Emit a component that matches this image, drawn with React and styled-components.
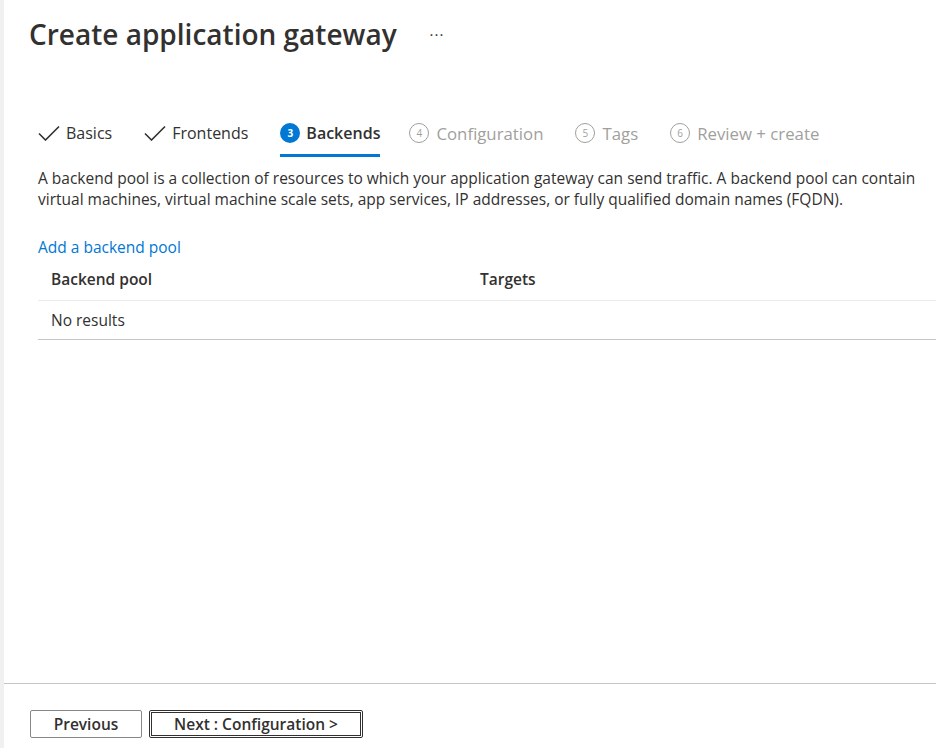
import React from "react";
import styled, { createGlobalStyle } from "styled-components";

const GlobalStyle = createGlobalStyle`
  html, body {
    margin: 0;
    padding: 0;
    background: #ffffff;
  }
  body {
    font-family: "Open Sans", "Noto Sans", sans-serif;
    color: #323130;
  }
`;

const Page = styled.div`
  width: 936px;
  height: 748px;
  display: flex;
  flex-direction: column;
  border-left: 4px solid #f0f0f0;
  box-sizing: border-box;
  overflow: hidden;
`;

const Main = styled.div`
  flex: 1;
  display: flex;
  flex-direction: column;
`;

const Header = styled.div`
  display: flex;
  align-items: center;
  gap: 33px;
  padding: 13px 0 0 25px;
  height: 42px;
`;

const Title = styled.h1`
  margin: 0;
  font-size: 28px;
  font-weight: 600;
  color: #323130;
`;

const More = styled.span`
  font-size: 15px;
  color: #323130;
  letter-spacing: 1px;
`;

const Body = styled.div`
  padding: 0 0 0 34px;
  display: flex;
  flex-direction: column;
`;

const Steps = styled.div`
  display: flex;
  align-items: stretch;
  gap: 32px;
  margin-top: 57px;
  height: 45px;
`;

const Step = styled.div`
  display: flex;
  align-items: center;
  gap: ${(p) => (p.$muted ? 7 : 6)}px;
  height: 42px;
  font-size: ${(p) => (p.$muted ? 16.8 : 16)}px;
  color: ${(p) => (p.$muted ? "#a19f9d" : "#323130")};
  font-weight: ${(p) => (p.$active ? 600 : 400)};
  border-bottom: 3px solid ${(p) => (p.$active ? "#0078d4" : "transparent")};
  margin-right: ${(p) => (p.$active ? -3 : 0)}px;
`;

const Num = styled.span`
  width: 20px;
  height: 20px;
  border-radius: 50%;
  box-sizing: border-box;
  display: inline-flex;
  align-items: center;
  justify-content: center;
  font-size: 10px;
  font-weight: ${(p) => (p.$active ? 700 : 400)};
  background: ${(p) => (p.$active ? "#0078d4" : "transparent")};
  color: ${(p) => (p.$active ? "#ffffff" : "#a19f9d")};
  border: ${(p) => (p.$active ? "none" : "1px solid #a19f9d")};
`;

const Check = () => (
  <svg width="22" height="16" viewBox="0 0 22 16" fill="none">
    <path d="M1 8.5 L7.5 15 L21 1.5" stroke="#323130" strokeWidth="1.6" />
  </svg>
);

const Desc = styled.p`
  margin: 11px 0 0 0;
  font-size: 15.5px;
  line-height: 21px;
  color: #323130;
`;

const Link = styled.a`
  margin-top: 27px;
  font-size: 15.5px;
  line-height: 21px;
  color: #0078d4;
  text-decoration: none;
  cursor: pointer;
`;

const Table = styled.div`
  display: flex;
  flex-direction: column;
`;

const Row = styled.div`
  display: grid;
  grid-template-columns: 429px 1fr;
  align-items: center;
  padding-left: 13px;
  height: ${(p) => p.$h}px;
  border-bottom: 1px solid ${(p) => p.$line};
  font-size: 15.5px;
  font-weight: ${(p) => (p.$head ? 600 : 400)};
  color: #323130;
`;

const Footer = styled.div`
  border-top: 1px solid #c8c6c4;
  padding: 26px 0 10px 26px;
  display: flex;
  gap: 7px;
`;

const Button = styled.button`
  height: 28px;
  width: ${(p) => p.$w}px;
  background: #ffffff;
  font-family: "Open Sans", "Noto Sans", sans-serif;
  font-size: 15.5px;
  font-weight: 600;
  color: #323130;
  border: 1px solid ${(p) => (p.$focus ? "#323130" : "#8a8886")};
  outline: ${(p) => (p.$focus ? "1px solid #323130" : "none")};
  outline-offset: -3px;
  border-radius: 2px;
  padding: 0;
  cursor: pointer;
`;

const steps = [
  { label: "Basics", done: true },
  { label: "Frontends", done: true },
  { label: "Backends", n: 3, active: true },
  { label: "Configuration", n: 4 },
  { label: "Tags", n: 5 },
  { label: "Review + create", n: 6 },
];

export default function App() {
  return (
    <>
      <GlobalStyle />
      <Page>
        <Main>
          <Header>
            <Title>Create application gateway</Title>
            <More>···</More>
          </Header>
          <Body>
            <Steps>
              {steps.map((s) => (
                <Step
                  key={s.label}
                  $active={s.active}
                  $muted={!s.done && !s.active}
                >
                  {s.done ? <Check /> : <Num $active={s.active}>{s.n}</Num>}
                  {s.label}
                </Step>
              ))}
            </Steps>
            <Desc>
              A backend pool is a collection of resources to which your
              application gateway can send traffic. A backend pool can contain
              virtual machines, virtual machine scale sets, app services, IP
              addresses, or fully qualified domain names (FQDN).
            </Desc>
            <Link>Add a backend pool</Link>
            <Table>
              <Row $head $h={42} $line="#edebe9">
                <span>Backend pool</span>
                <span>Targets</span>
              </Row>
              <Row $h={38} $line="#c8c6c4">
                <span>No results</span>
              </Row>
            </Table>
          </Body>
        </Main>
        <Footer>
          <Button $w={112}>Previous</Button>
          <Button $w={214} $focus>
            Next : Configuration &gt;
          </Button>
        </Footer>
      </Page>
    </>
  );
}
